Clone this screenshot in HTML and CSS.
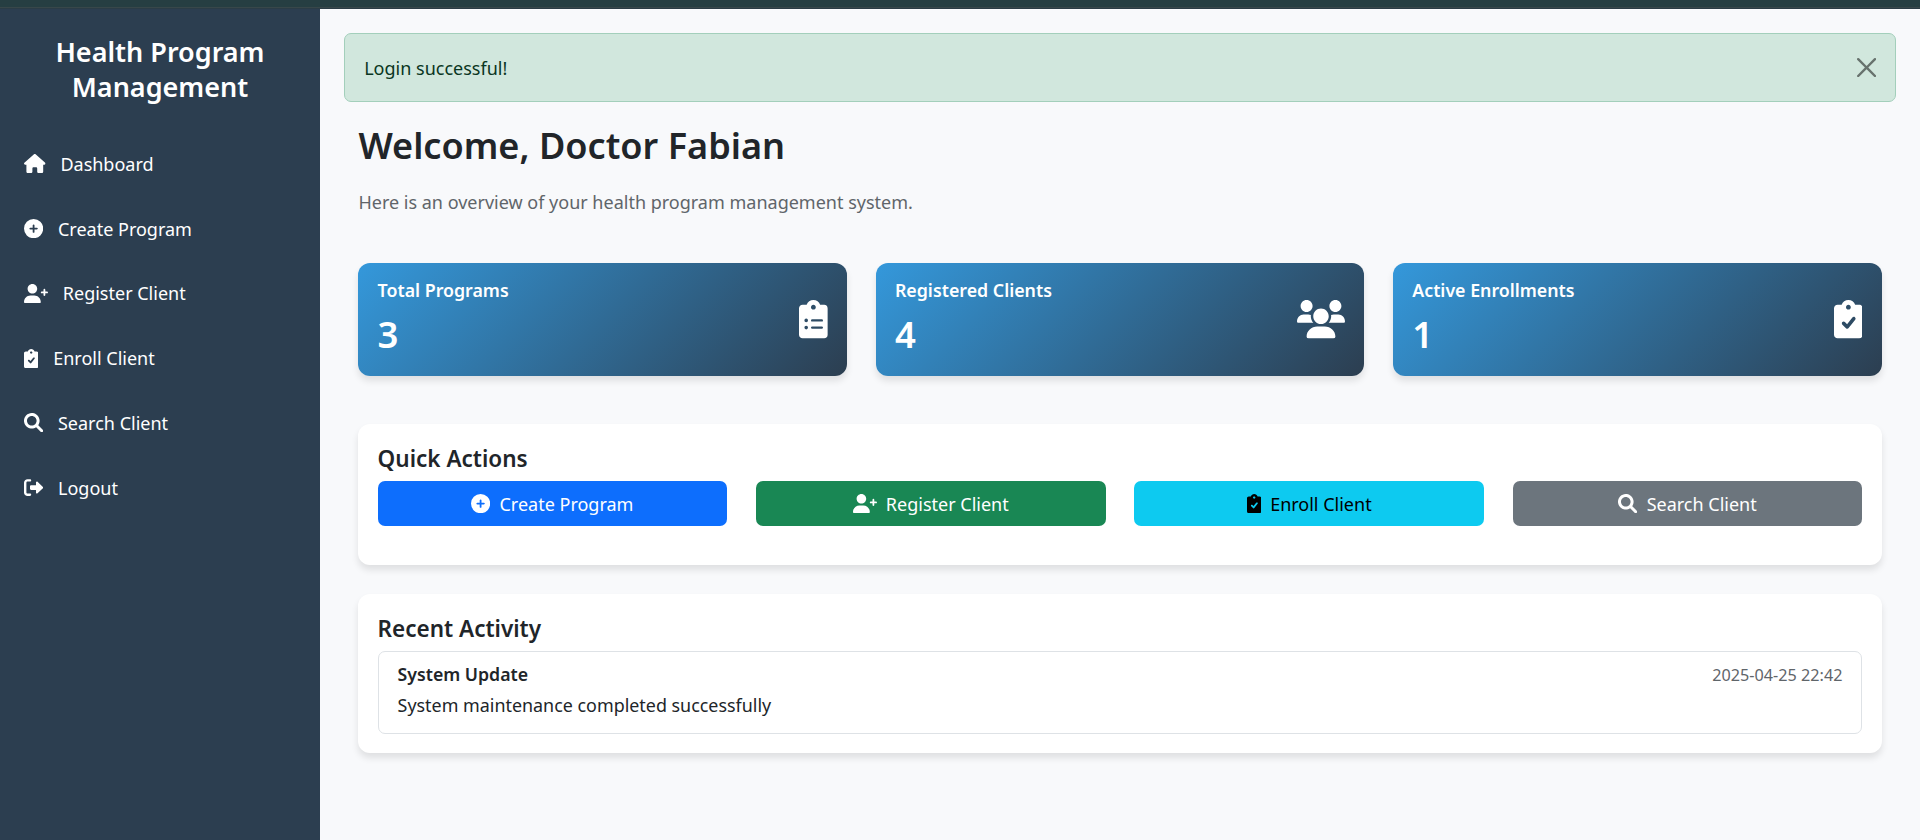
FILE: index.html
```html
<!DOCTYPE html>
<html lang="en">
<head>
<meta charset="utf-8">
<title>Health Program Management</title>
<link rel="stylesheet" href="styles.css">
</head>
<body>
<svg class="sprite" aria-hidden="true">
  <symbol id="house" viewBox="0 0 576 512"><path d="M575.8 255.5c0 18-15 32.1-32 32.1h-32l.7 160.2c0 2.7-.2 5.4-.5 8.1V472c0 22.1-17.9 40-40 40H456c-1.1 0-2.2 0-3.3-.1c-1.4 .1-2.8 .1-4.2 .1H416 392c-22.1 0-40-17.9-40-40V448 384c0-17.7-14.3-32-32-32H256c-17.7 0-32 14.3-32 32v64 24c0 22.1-17.9 40-40 40H160 128.1c-1.5 0-3-.1-4.5-.2c-1.2 .1-2.4 .2-3.6 .2H104c-22.1 0-40-17.9-40-40V360c0-.9 0-1.9 .1-2.8V287.6H32c-18 0-32-14-32-32.1c0-9 3-17 10-24L266.4 8c7-7 15-8 22-8s15 2 21 7L564.8 231.5c8 7 12 15 11 24z"/></symbol>
  <symbol id="plus" viewBox="0 0 512 512"><path d="M256 512A256 256 0 1 0 256 0a256 256 0 1 0 0 512zM232 344V280H168c-13.3 0-24-10.7-24-24s10.7-24 24-24h64V168c0-13.3 10.7-24 24-24s24 10.7 24 24v64h64c13.3 0 24 10.7 24 24s-10.7 24-24 24H280v64c0 13.3-10.7 24-24 24s-24-10.7-24-24z"/></symbol>
  <symbol id="user-plus" viewBox="0 0 640 512"><path d="M224 256c70.7 0 128-57.3 128-128S294.7 0 224 0 96 57.3 96 128s57.3 128 128 128zM274.7 304H173.3C77.6 304 0 381.6 0 477.3c0 19.1 15.5 34.7 34.7 34.7h378.7c19.1 0 34.6-15.5 34.6-34.7C448 381.6 370.4 304 274.7 304zM616 200h-48v-48c0-13.3-10.7-24-24-24s-24 10.7-24 24v48h-48c-13.3 0-24 10.7-24 24s10.7 24 24 24h48v48c0 13.3 10.7 24 24 24s24-10.7 24-24v-48h48c13.3 0 24-10.7 24-24s-10.7-24-24-24z"/></symbol>
  <symbol id="clip-check" viewBox="0 0 384 512"><path fill-rule="evenodd" d="M336 64h-53.9C268.9 26.8 233.7 0 192 0S115.1 26.8 101.9 64H48C21.5 64 0 85.5 0 112v352c0 26.5 21.5 48 48 48h288c26.5 0 48-21.5 48-48V112c0-26.5-21.5-48-48-48zM192 64c17.7 0 32 14.3 32 32s-14.3 32-32 32-32-14.3-32-32 14.3-32 32-32zM282.9 262.8l-88 112c-4.1 5.2-10.3 8.4-16.8 8.8-.5 0-.9 0-1.4 0-6.3 0-12.4-2.5-17-7l-48-48c-9.4-9.4-9.4-24.6 0-33.9s24.6-9.4 33.9 0l28.6 28.6 71-90.3c8.2-10.4 23.3-12.2 33.7-4 10.4 8.2 12.2 23.2 4 33.8z"/></symbol>
  <symbol id="clip-list" viewBox="0 0 384 512"><path fill-rule="evenodd" d="M336 64h-53.9C268.9 26.8 233.7 0 192 0S115.1 26.8 101.9 64H48C21.5 64 0 85.5 0 112v352c0 26.5 21.5 48 48 48h288c26.5 0 48-21.5 48-48V112c0-26.5-21.5-48-48-48zM192 64c17.7 0 32 14.3 32 32s-14.3 32-32 32-32-14.3-32-32 14.3-32 32-32zM96 248a24 24 0 1 1 0 48 24 24 0 0 1 0-48zM96 344a24 24 0 1 1 0 48 24 24 0 0 1 0-48zM176 256h128a16 16 0 0 1 0 32H176a16 16 0 0 1 0-32zM176 352h128a16 16 0 0 1 0 32H176a16 16 0 0 1 0-32z"/></symbol>
  <symbol id="users" viewBox="0 0 640 512"><path d="M319.9 320c57.4 0 103.1-46.6 103.1-104c0-57.4-46.5-104-103.1-104c-57.4 0-103.1 46.6-103.1 104C215.9 273.4 262.5 320 319.9 320zM369.9 352H270.1C191.6 352 128 411.7 128 485.3C128 500.1 140.7 512 156.4 512h327.2C499.3 512 512 500.1 512 485.3C512 411.7 448.4 352 369.9 352zM512 160c44.2 0 80-35.8 80-80S556.2 0 512 0c-44.2 0-80 35.8-80 80S467.8 160 512 160zM183.9 216c0-5.4 1-10.6 1.6-15.9C174.6 194.1 162.6 192 149.9 192H88.1C39.4 192 0 233.8 0 285.3C0 295.6 7.9 304 17.6 304h199.5C196.7 280.2 183.9 249.7 183.9 216zM128 160c44.2 0 80-35.8 80-80S172.2 0 128 0C83.8 0 48 35.8 48 80S83.8 160 128 160zM551.9 192h-61.8c-12.8 0-24.9 3-35.9 8.2C454.8 205.5 455.8 210.6 455.8 216c0 33.7-12.8 64.2-33.2 88h199.7C632.1 304 640 295.6 640 285.3C640 233.8 600.6 192 551.9 192z"/></symbol>
  <symbol id="search" viewBox="0 0 512 512"><path fill-rule="evenodd" d="M500.3 443.7l-119.7-119.7c27.2-40.4 40.7-90.9 33.5-144.7C401.8 87.8 326.8 13.3 235.2 1.7C99-15.5-15.5 99 1.7 235.2c11.6 91.6 86.1 166.7 177.6 178.9c53.8 7.2 104.3-6.2 144.7-33.5l119.7 119.7c15.6 15.6 41 15.6 56.6 0C515.9 484.7 515.9 459.3 500.3 443.7zM80 208c0-70.6 57.4-128 128-128s128 57.4 128 128c0 70.6-57.4 128-128 128S80 278.6 80 208z"/></symbol>
  <symbol id="logout" viewBox="0 0 512 512"><path d="M96 480h64c17.7 0 32-14.3 32-32s-14.3-32-32-32H96c-17.7 0-32-14.3-32-32V128c0-17.7 14.3-32 32-32h64c17.7 0 32-14.3 32-32s-14.3-32-32-32H96C43 32 0 75 0 128v256C0 437 43 480 96 480zM504.8 238.5l-144.1-136c-7-6.6-17.2-8.4-26-4.6c-8.8 3.8-14.5 12.5-14.5 22.1l-.1 72H192c-17.7 0-32 14.3-32 32v64c0 17.7 14.3 32 32 32h128.1l.1 72c0 9.6 5.7 18.3 14.5 22c8.8 3.8 19 2 26-4.6l144.1-136C514.4 264.4 514.4 247.6 504.8 238.5z"/></symbol>
  <symbol id="close" viewBox="0 0 16 16"><path d="M.293.293a1 1 0 0 1 1.414 0L8 6.586 14.293.293a1 1 0 1 1 1.414 1.414L9.414 8l6.293 6.293a1 1 0 0 1-1.414 1.414L8 9.414l-6.293 6.293a1 1 0 0 1-1.414-1.414L6.586 8 .293 1.707a1 1 0 0 1 0-1.414z"/></symbol>
</svg>

<div class="topbar"></div>
<div class="layout">
  <aside class="sidebar">
    <h4 class="brand">Health Program Management</h4>
    <nav class="nav">
      <a class="nav-link"><svg class="icon w18"><use href="#house"/></svg><span>Dashboard</span></a>
      <a class="nav-link"><svg class="icon w16"><use href="#plus"/></svg><span>Create Program</span></a>
      <a class="nav-link"><svg class="icon w20"><use href="#user-plus"/></svg><span>Register Client</span></a>
      <a class="nav-link"><svg class="icon w12"><use href="#clip-check"/></svg><span>Enroll Client</span></a>
      <a class="nav-link"><svg class="icon w16"><use href="#search"/></svg><span>Search Client</span></a>
      <a class="nav-link"><svg class="icon w16"><use href="#logout"/></svg><span>Logout</span></a>
    </nav>
  </aside>
  <main class="main">
    <div class="alert"><span>Login successful!</span><svg class="icon w16 close"><use href="#close"/></svg></div>
    <div class="content">
      <h2 class="welcome">Welcome, Doctor Fabian</h2>
      <p class="lead">Here is an overview of your health program management system.</p>
      <section class="stats">
        <div class="stat"><div><h6>Total Programs</h6><div class="num">3</div></div><svg class="icon big w12"><use href="#clip-list"/></svg></div>
        <div class="stat"><div><h6>Registered Clients</h6><div class="num">4</div></div><svg class="icon big w20"><use href="#users"/></svg></div>
        <div class="stat"><div><h6>Active Enrollments</h6><div class="num">1</div></div><svg class="icon big w12"><use href="#clip-check"/></svg></div>
      </section>
      <section class="card quick">
        <h5>Quick Actions</h5>
        <div class="actions">
          <a class="btn primary"><svg class="icon w16"><use href="#plus"/></svg><span>Create Program</span></a>
          <a class="btn success"><svg class="icon w20"><use href="#user-plus"/></svg><span>Register Client</span></a>
          <a class="btn info"><svg class="icon w12"><use href="#clip-check"/></svg><span>Enroll Client</span></a>
          <a class="btn secondary"><svg class="icon w16"><use href="#search"/></svg><span>Search Client</span></a>
        </div>
      </section>
      <section class="card recent">
        <h5>Recent Activity</h5>
        <div class="item">
          <div class="item-head"><h6>System Update</h6><small>2025-04-25 22:42</small></div>
          <p>System maintenance completed successfully</p>
        </div>
      </section>
    </div>
  </main>
</div>
</body>
</html>
```
FILE: styles.css
```css
* { box-sizing: border-box; }
body {
  margin: 0;
  height: 840px;
  overflow: hidden;
  display: flex;
  flex-direction: column;
  background: #f8f9fb;
  color: #212529;
  font-family: "Noto Sans", "Open Sans", sans-serif;
  font-size: 18px;
  line-height: 28.8px;
}
h2, h4, h5, h6, p { margin: 0; font-weight: 560; }
p { font-weight: 400; }
.sprite { position: absolute; width: 0; height: 0; }

.icon { height: 19.2px; flex: none; fill: currentColor; display: block; }
.w12 { width: 14.4px; }
.w16 { width: 19.2px; }
.w18 { width: 21.6px; }
.w20 { width: 24px; }
.big { height: 38.4px; }
.big.w12 { width: 28.8px; }
.big.w20 { width: 48px; }

.topbar {
  height: 9px;
  flex: none;
  background: linear-gradient(#263e42 0 7px, #38474a 7px 8px, #2b3c46 8px);
}
.layout { display: flex; flex: 1; }

.sidebar { width: 320px; flex: none; background: #2c3e50; color: #fff; padding-top: 26px; }
.brand { font-size: 27px; line-height: 34.6px; text-align: center; padding: 0 48px; }
.nav { padding-top: 27.3px; }
.nav-link { display: flex; align-items: center; gap: 14.8px; height: 64.75px; padding-left: 24px; }
.nav-link span { padding-top: 1px; }

.main { flex: 1; padding: 24px; }
.alert {
  display: flex;
  align-items: center;
  justify-content: space-between;
  height: 69px;
  padding: 0 19.2px;
  border: 1px solid #a3cfbb;
  border-radius: 7px;
  background: #d1e7dd;
  color: #0a3622;
}
.alert span, .btn span { padding-top: 2px; }
.close { color: #000; opacity: .5; }
.content { padding: 20px 14.4px 0; }
.welcome { font-size: 36.1px; line-height: 47px; }
.lead { margin-top: 19px; color: #5f656a; }
.stats { display: grid; grid-template-columns: repeat(3, 1fr); gap: 28.8px; margin-top: 46.2px; }
.stat {
  display: flex;
  align-items: center;
  justify-content: space-between;
  height: 113px;
  padding: 0 19.2px;
  border-radius: 12px;
  background: linear-gradient(135deg, #3498db, #2c3e50);
  color: #fff;
  box-shadow: 0 5px 7px rgba(0, 0, 0, .1);
}
.stat h6 { font-size: 17.8px; font-weight: 600; line-height: 23px; }
.num { margin-top: 9px; font-size: 36.5px; font-weight: 600; line-height: 46px; }
.stat > div { margin-top: -3px; }

.card { padding: 19px 19.2px 0; border-radius: 12px; background: #fff; box-shadow: 0 5px 7px rgba(0, 0, 0, .1); }
h5 { font-size: 22.5px; line-height: 29px; padding-top: 1px; }
.quick { height: 141px; margin-top: 48px; }
.actions { display: grid; grid-template-columns: repeat(4, 1fr); gap: 28.8px; margin-top: 8px; }
.btn { display: flex; align-items: center; justify-content: center; gap: 9px; height: 45px; border-radius: 7px; color: #fff; }
.primary { background: #0d6efd; }
.success { background: #198754; }
.info { background: #0dcaf0; color: #000; }
.secondary { background: #6c757d; }
.recent { height: 159px; margin-top: 29px; }
.item { height: 83px; margin-top: 8px; padding: 10.6px 19px; border: 1px solid #dee2e6; border-radius: 7px; }
.item-head { display: flex; justify-content: space-between; height: 23px; }
.item h6 { font-size: 17.7px; font-weight: 600; line-height: 23px; }
.item small { font-size: 16.2px; line-height: 25px; color: #5f656a; }
.item p { margin-top: 5px; font-size: 17.9px; }
```
